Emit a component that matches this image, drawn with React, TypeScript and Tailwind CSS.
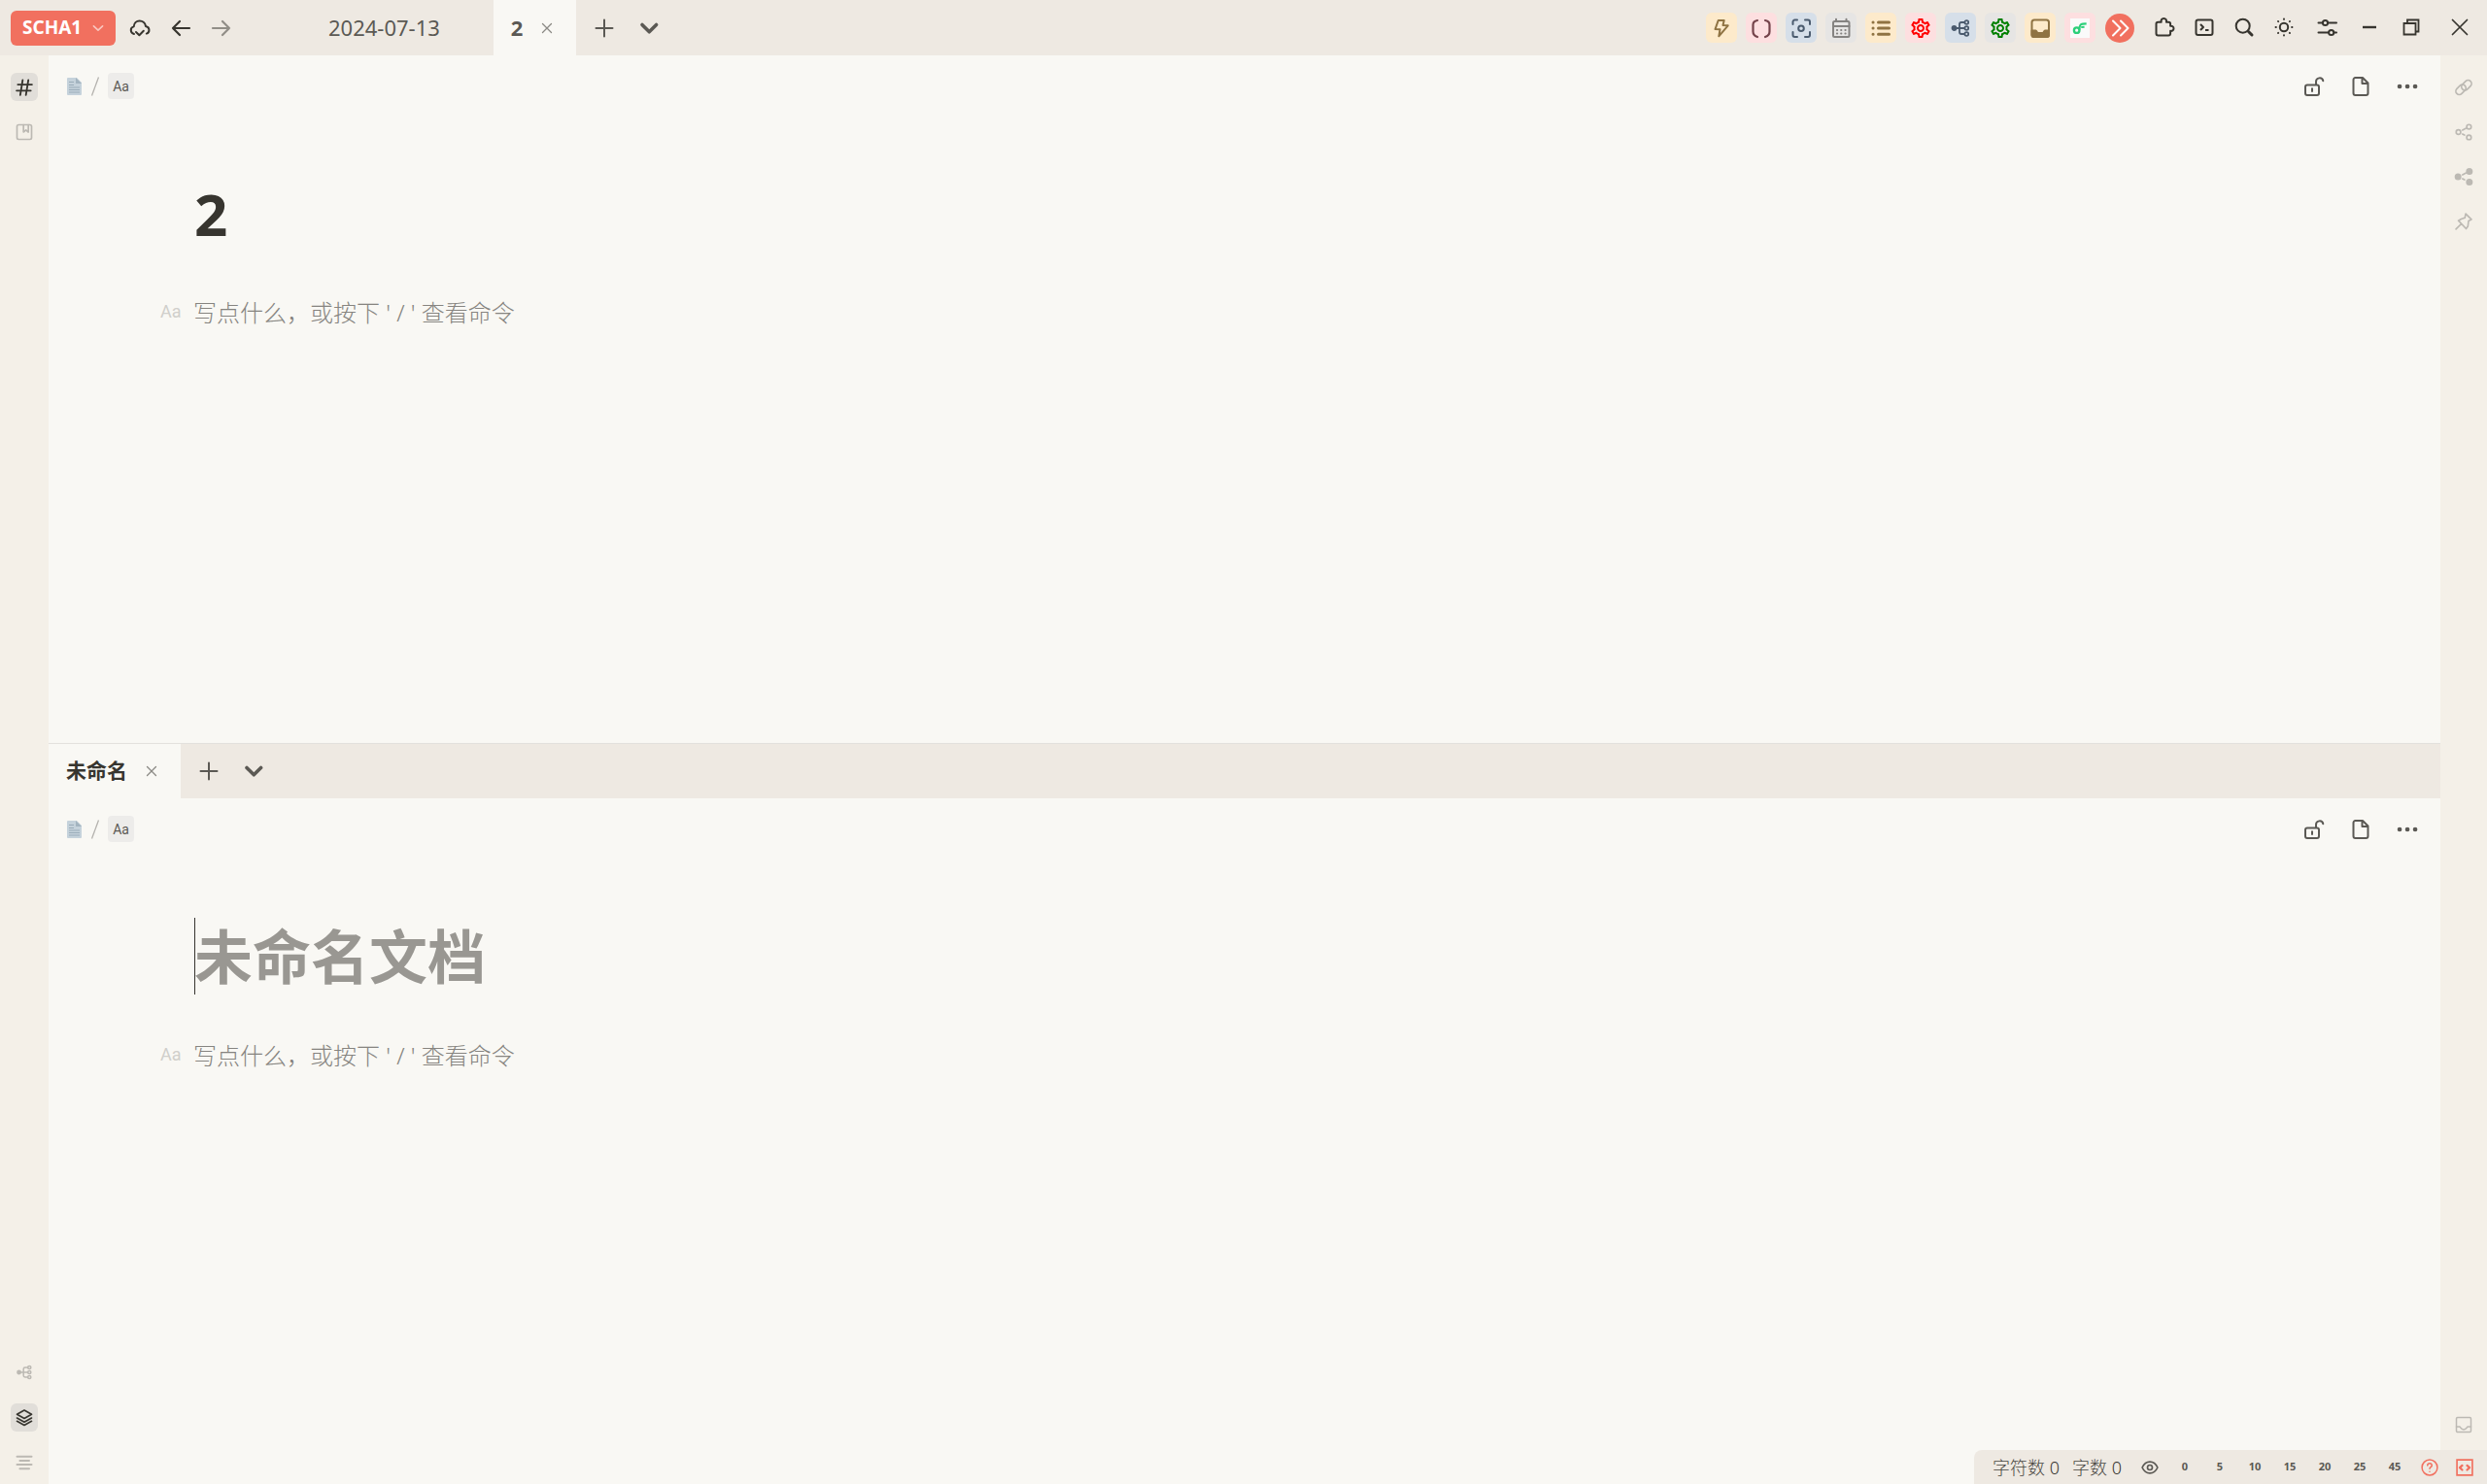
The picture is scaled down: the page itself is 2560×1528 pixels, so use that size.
import type { ReactNode } from "react";
import { MdOutlineSettings } from "react-icons/md";

function Icon({
  children,
  size = 24,
  stroke = 2,
  fill = "none",
}: {
  children: ReactNode;
  size?: number;
  stroke?: number;
  fill?: string;
}) {
  return (
    <svg
      width={size}
      height={size}
      viewBox="0 0 24 24"
      fill={fill}
      stroke="currentColor"
      strokeWidth={stroke}
      strokeLinecap="round"
      strokeLinejoin="round"
      aria-hidden="true"
      className="shrink-0"
    >
      {children}
    </svg>
  );
}

function IconButton({
  label,
  className = "",
  children,
}: {
  label: string;
  className?: string;
  children: ReactNode;
}) {
  return (
    <button
      type="button"
      aria-label={label}
      className={`flex shrink-0 items-center justify-center ${className}`}
    >
      {children}
    </button>
  );
}

function TreeIcon({ size = 24 }: { size?: number }) {
  return (
    <Icon size={size} stroke={1.8}>
      <circle cx="5.5" cy="12" r="2" fill="currentColor" />
      <path d="M7 12h9M16 6h-3a2 2 0 0 0-2 2v8a2 2 0 0 0 2 2h3" />
      <circle cx="18.3" cy="6" r="1.9" />
      <circle cx="18.3" cy="12" r="1.9" />
      <circle cx="18.3" cy="18" r="1.9" />
    </Icon>
  );
}

const plugins = [
  {
    label: "Flash",
    style: "bg-[#fdeacb] text-[#8f7343]",
    icon: (
      <Icon>
        <path d="M8.7 4h6l-1.2 5 5.2.3L9.3 20.3l1.2-7-5-.2z" />
      </Icon>
    ),
  },
  {
    label: "Brackets",
    style: "bg-[#fddfe0] text-[#74434a]",
    icon: (
      <Icon stroke={2.2}>
        <path d="M8 4C5 4.5 3.5 5.5 3.5 8.5v7c0 3 1.5 4.500 4.500 5.500M16 4c3 .5 4.500 1.500 4.500 4.500v7c0 3-1.500 4.500-4.500 5.500" />
      </Icon>
    ),
  },
  {
    label: "Focus",
    style: "bg-[#d6dfe9] text-[#4b5b6e]",
    icon: (
      <Icon>
        <path d="M3.500 8V5.500a2 2 0 0 1 2-2H8M16 3.500h3a2 2 0 0 1 2 2V8M21 16v3a2 2 0 0 1-2 2h-3M8 21H5.500a2 2 0 0 1-2-2v-3" />
        <circle cx="12" cy="12.3" r="2.8" />
      </Icon>
    ),
  },
  {
    label: "Calendar",
    style: "bg-[#e6e5e4] text-[#858381]",
    icon: (
      <Icon>
        <rect x="4" y="5" width="16.500" height="16" rx="1.500" />
        <path d="M4 10h16.500M7 2.800V5M17.500 2.800V5" />
        <path
          d="M8 14h.1M12.200 14h.1M16.500 14h.1M8 17.500h.1M12.200 17.500h.1M16.500 17.500h.1"
          strokeWidth="2.2"
        />
      </Icon>
    ),
  },
  {
    label: "List",
    style: "bg-[#fdeacb] text-[#8f7343]",
    icon: (
      <Icon stroke={3}>
        <path d="M4 6h.1M4 12h.1M4 18.300h.1M9.500 6h11M9.500 12h11M9.500 18.300h11" />
      </Icon>
    ),
  },
  {
    label: "Settings",
    style: "bg-[#fddfe0] text-[#ff0000]",
    icon: <MdOutlineSettings size={24} />,
  },
  {
    label: "Mind map",
    style: "bg-[#d6dfe9] text-[#4b5b6e]",
    icon: <TreeIcon />,
  },
  {
    label: "Tools",
    style: "bg-[#e6e5e4] text-[#008000]",
    icon: <MdOutlineSettings size={24} />,
  },
  {
    label: "Inbox",
    style: "bg-[#fdeacb] text-[#8f7343]",
    icon: (
      <Icon>
        <rect x="3.500" y="3.500" width="17.500" height="17.500" rx="2.500" />
        <path
          d="M3.500 14.500h4c1 0 1 2.500 2.500 2.500h4.500c1.500 0 1.500-2.500 2.500-2.500h4V19a2 2 0 0 1-2 2H5.500a2 2 0 0 1-2-2z"
          fill="currentColor"
        />
      </Icon>
    ),
  },
  {
    label: "Flow",
    style: "bg-[#fddfe0] text-[#2bcf79]",
    icon: (
      <span className="flex size-5 items-center justify-center bg-[#fafafa]">
        <Icon size={20}>
          <circle cx="8" cy="14.600" r="3.300" strokeWidth="2.800" />
          <path
            d="M11.300 14c0-5 .7-7 4.200-7.300l4.500-.2M13.500 10.800l4-.3"
            strokeWidth="2.600"
            strokeLinecap="butt"
          />
        </Icon>
      </span>
    ),
  },
];

const tools = [
  {
    label: "Plugins",
    icon: (
      <Icon>
        <path d="M5.500 20.500c-1.300 0-2-.7-2-2V8.500c0-1.200.7-1.800 2-1.800h3.200c-.7-2 .6-3.700 2.600-3.700s3.300 1.700 2.600 3.700h2.300c1.200 0 1.900.6 1.900 1.800v2.300c1.800-.5 3.400.7 3.400 2.500s-1.600 3-3.400 2.500v2.700c0 1.300-.7 2-2 2z" />
      </Icon>
    ),
  },
  {
    label: "Terminal",
    icon: (
      <Icon>
        <rect x="3.500" y="4.500" width="17" height="15.500" rx="2" />
        <path d="m8 9 3 3-3 3M13 15h3.500" strokeLinecap="butt" />
      </Icon>
    ),
  },
  {
    label: "Search",
    icon: (
      <Icon>
        <circle cx="10.700" cy="10.700" r="7" />
        <path d="m16.500 16.500 3.500 3.500" strokeWidth="3" />
      </Icon>
    ),
  },
  {
    label: "Theme",
    icon: (
      <Icon>
        <circle cx="12" cy="12" r="4.200" />
        <path
          d="M12 3.500v.4M12 20.100v.4M3.500 12h.4M20.100 12h.4M6 6l.2.2M17.800 17.800l.2.2M6 18l.2-.2M17.800 6.200l.2-.2"
          strokeWidth="1.900"
        />
      </Icon>
    ),
  },
];

function CloseIcon() {
  return (
    <Icon stroke={1.3}>
      <path d="m7.500 7.500 9 9M16.500 7.500l-9 9" />
    </Icon>
  );
}

function Tab({ title, active = false }: { title: string; active?: boolean }) {
  return (
    <div
      className={`flex items-center gap-[13px] self-stretch px-[18px] ${active ? "bg-[#f9f8f4] font-bold" : ""}`}
    >
      <span>{title}</span>
      <IconButton
        label="Close tab"
        className={active ? "size-6 text-[#8b8984]" : "invisible size-6"}
      >
        <CloseIcon />
      </IconButton>
    </div>
  );
}

function TabActions() {
  return (
    <div className="flex items-center gap-[22px] pl-[17px] text-[#5b5954]">
      <IconButton label="New tab" className="size-6">
        <Icon>
          <path d="M12 3.500v17M3.500 12h17" />
        </Icon>
      </IconButton>
      <IconButton label="Tab list" className="size-6">
        <Icon stroke={3.6}>
          <path d="m5 8.500 7.300 7.300 7.300-7.300" />
        </Icon>
      </IconButton>
    </div>
  );
}

function TitleBar() {
  return (
    <header className="flex h-[57px] shrink-0 items-center bg-[#eee9e2] pl-[11px] pr-3 text-[#37352f]">
      <button
        type="button"
        className="flex h-9 w-[108px] items-center justify-between rounded-md bg-[#f1705f] pl-3 pr-2 text-[19px] font-bold text-white"
      >
        SCHA1
        <Icon size={20} stroke={2}>
          <path d="m6.500 9.500 5.500 5 5.500-5" className="opacity-60" />
        </Icon>
      </button>

      <div className="flex gap-[18px] pl-[13px] pr-20">
        <IconButton label="Sync" className="size-6">
          <Icon>
            <path d="M6 18c-4-1-4.500-6.500-.3-7.600C6.200 2.600 16.800 2.600 18 10c4.500 1 4.500 6.500.8 7.600" />
            <path d="m8 16 3.400 3.200 4.400-4.400" />
          </Icon>
        </IconButton>
        <IconButton label="Back" className="size-6">
          <Icon stroke={2.2}>
            <path d="M21 12H4M11 5l-7 7 7 7" />
          </Icon>
        </IconButton>
        <IconButton label="Forward" className="size-6 opacity-50">
          <Icon stroke={2.2}>
            <path d="M3 12h17M13 5l7 7-7 7" />
          </Icon>
        </IconButton>
      </div>

      <nav className="flex items-center self-stretch text-[22px] text-[#5b5954]">
        <Tab title="2024-07-13" />
        <Tab title="2" active />
        <TabActions />
      </nav>

      <div className="ml-auto flex items-center">
        <div className="flex gap-[9px]">
          {plugins.map((plugin) => (
            <IconButton
              key={plugin.label}
              label={plugin.label}
              className={`h-[31px] w-8 rounded-md ${plugin.style}`}
            >
              {plugin.icon}
            </IconButton>
          ))}
        </div>
        <IconButton
          label="More plugins"
          className="ml-2.5 size-[30px] rounded-full bg-[#f1705f] text-white"
        >
          <Icon stroke={2}>
            <path d="m5 4.500 7.500 7.500L5 19.500M13 4.500l7.500 7.500-7.500 7.500" />
          </Icon>
        </IconButton>
        <div className="ml-[15px] flex gap-[9px] pb-0.5">
          {tools.map((tool) => (
            <IconButton key={tool.label} label={tool.label} className="size-8">
              {tool.icon}
            </IconButton>
          ))}
        </div>
        <div className="ml-[13px] flex gap-[11px] pb-0.5">
          <IconButton label="Preferences" className="size-8">
            <Icon>
              <path d="M2.500 7.500H7M12.500 7.500H21M2.500 17.500H13M18.500 17.500H21" />
              <circle cx="9.500" cy="7.500" r="2.600" />
              <circle cx="15.700" cy="17.500" r="2.600" />
            </Icon>
          </IconButton>
          <IconButton label="Minimize" className="size-8">
            <Icon>
              <path d="M5 12h14" strokeLinecap="butt" strokeWidth="2.400" />
            </Icon>
          </IconButton>
          <IconButton label="Restore" className="size-8">
            <Icon stroke={1.8}>
              <path d="M4.500 8h12v11.500h-12zM8 8V4.500h11.500v12h-3" strokeLinejoin="miter" />
            </Icon>
          </IconButton>
          <IconButton label="Close" className="ml-[7px] size-8">
            <Icon stroke={1.7}>
              <path d="m4.500 4.500 15 15M19.500 4.500l-15 15" />
            </Icon>
          </IconButton>
        </div>
      </div>
    </header>
  );
}

function LeftDock() {
  return (
    <aside className="flex w-[50px] shrink-0 flex-col items-center justify-between bg-[#f4f0e8] pb-2 pt-[18px] text-[#bcb9b3]">
      <div className="flex flex-col gap-[18px]">
        <IconButton label="Tags" className="h-[29px] w-7 rounded-md bg-[#e1ded9] text-[#37352f]">
          <Icon size={20} stroke={2.2}>
            <path d="M4 8.500h17.500M2.500 16h17.500M10 3 7 21.500M17 3l-3 18.500" />
          </Icon>
        </IconButton>
        <IconButton label="Bookmarks" className="size-7">
          <Icon size={20} stroke={2}>
            <rect x="3" y="3" width="18" height="18" rx="2" />
            <path d="M11 3v9l3-2.500 3 2.500V3" />
          </Icon>
        </IconButton>
      </div>
      <div className="flex flex-col gap-[18px]">
        <IconButton label="Graph" className="size-7">
          <TreeIcon size={20} />
        </IconButton>
        <IconButton label="Layers" className="h-[29px] w-7 rounded-md bg-[#e1ded9] text-[#37352f]">
          <Icon size={20} stroke={2}>
            <path d="m12 2.500 9 5-9 5-9-5zM3 12l9 5 9-5M3 16l9 5 9-5" />
          </Icon>
        </IconButton>
        <IconButton label="Outline" className="size-7">
          <Icon size={20} stroke={2.400}>
            <path d="M3 4.500h18M6.500 9.500h11.500M3 14.500h18M6.500 19.500h11.500" />
          </Icon>
        </IconButton>
      </div>
    </aside>
  );
}

function RightDock() {
  return (
    <aside className="flex w-12 shrink-0 flex-col items-center justify-between bg-[#f4f0e8] pb-[47px] pt-[18px] text-[#bcb9b3]">
      <div className="flex flex-col gap-[18px]">
        <IconButton label="Backlinks" className="h-[29px] w-7">
          <Icon size={20}>
            <rect x="8.500" y="5" width="14" height="8.500" rx="4.250" transform="rotate(-45 15.500 9.250)" />
            <rect x="1.500" y="10.500" width="14" height="8.500" rx="4.250" transform="rotate(-45 8.500 14.750)" />
          </Icon>
        </IconButton>
        <IconButton label="Relation graph" className="size-7">
          <Icon size={20}>
            <circle cx="5.500" cy="12" r="2.800" />
            <circle cx="18.500" cy="5.500" r="2.800" />
            <circle cx="18.500" cy="18.500" r="2.800" />
            <path d="m10.500 9.500 4.500-2.200M10.500 14.500l2.500 1.200" />
          </Icon>
        </IconButton>
        <IconButton label="Global graph" className="size-7">
          <Icon size={20} fill="currentColor">
            <circle cx="5" cy="12" r="3.200" />
            <circle cx="19" cy="5.500" r="3.200" />
            <circle cx="19" cy="18.500" r="3.200" />
            <path d="m10.500 9.500 4.500-2.200M10.500 14.500l2.500 1.200" />
          </Icon>
        </IconButton>
        <IconButton label="Pin" className="size-7">
          <Icon size={20}>
            <path d="m14.500 2.500 7 7-3.500 2-.8 6.500-2.200 3-9.500-10L9 9l4.500-1.500zM9 15l-6.500 6.500" />
          </Icon>
        </IconButton>
      </div>
      <IconButton label="Inbox" className="size-7">
        <Icon size={20} stroke={1.8}>
          <rect x="3" y="3" width="18" height="18" rx="1.500" />
          <path d="M3 14.500h4c1 0 1.500 3.500 5 3.500s4-3.500 5-3.500h4" />
        </Icon>
      </IconButton>
    </aside>
  );
}

function Pane({ id, title, focused = false }: { id: string; title: string; focused?: boolean }) {
  return (
    <section className="flex min-h-0 flex-1 flex-col pt-[18px]">
      {/* Breadcrumb */}
      <div className="flex h-[27px] shrink-0 items-center pl-[19px] pr-[22px]">
        <svg width="15" height="18" viewBox="0 0 15 18" aria-hidden="true">
          <path d="M1 0h9l5 5v12a1 1 0 0 1-1 1H1a1 1 0 0 1-1-1V1a1 1 0 0 1 1-1z" fill="#c5d2db" />
          <path d="M9 0v6h6z" fill="#a3b4c0" />
          <path d="M2 4.500h5M2 7.500h5M2 10h11M2 12.500h11M2 15h11" stroke="#9aacb9" />
        </svg>
        <svg width="27" height="20" viewBox="0 0 27 20" stroke="#b5b3af" aria-hidden="true">
          <path d="M10.500 19.500 17.500.5" strokeWidth="1.300" />
        </svg>
        <button
          type="button"
          className="h-[27px] w-[27px] rounded-sm bg-[#edecea] font-[Roboto,sans-serif] text-sm text-[#5b5954]"
        >
          Aa
        </button>
        <div className="ml-auto flex gap-6 text-[#5b5954]">
          <IconButton label="Unlock" className="size-6">
            <Icon>
              <rect x="3" y="10.500" width="14" height="10.500" rx="2" />
              <path d="M14 10V7a3.700 3.700 0 0 1 7.300-.8M10 14.300v2.700" />
            </Icon>
          </IconButton>
          <IconButton label="Document" className="size-6">
            <Icon>
              <path d="M14 3H6.500a2 2 0 0 0-2 2v14a2 2 0 0 0 2 2h11a2 2 0 0 0 2-2V8.500zM13.500 3.500V9h5.500" />
            </Icon>
          </IconButton>
          <IconButton label="More" className="size-6">
            <Icon>
              <path d="M4 12h.1M12 12h.1M20 12h.1" strokeWidth="4.600" />
            </Icon>
          </IconButton>
        </div>
      </div>

      {/* Title */}
      <div className="mt-[78px] flex h-[79px] shrink-0 items-center pl-[150px] pr-[150px]">
        {focused && <span className="-mr-px h-[79px] w-px bg-[#37352f]" />}
        <input
          id={`${id}-title`}
          aria-label="Title"
          placeholder="未命名文档"
          defaultValue={title}
          className="h-[79px] min-w-0 flex-1 bg-transparent text-[60px] font-bold text-[#37352f] outline-none placeholder:text-[#999792]"
        />
      </div>

      {/* First block */}
      <div className="mt-[43px] flex h-[38px] shrink-0 items-center pl-[115px] pr-[150px]">
        <label
          htmlFor={`${id}-block`}
          className="w-[34px] shrink-0 font-[Roboto,sans-serif] text-lg text-[#d0cfcb]"
        >
          Aa
        </label>
        <input
          id={`${id}-block`}
          placeholder="写点什么，或按下 ' / ' 查看命令"
          className="h-[38px] min-w-0 flex-1 bg-transparent text-2xl font-light outline-none placeholder:text-[#868480]"
        />
      </div>
    </section>
  );
}

function StatusBar() {
  return (
    <footer className="absolute bottom-0 right-0 flex h-[35px] items-center rounded-tl-lg bg-[#eee9e2] pl-[19px] pr-[5px] text-[#5b5954]">
      <span className="mr-[13px] text-lg font-light text-[#4a4843]">
        字符数 <span className="text-[#37352f]">0</span>
      </span>
      <span className="mr-[11px] text-lg font-light text-[#4a4843]">
        字数 <span className="text-[#37352f]">0</span>
      </span>
      <IconButton label="Preview" className="w-9">
        <Icon size={20}>
          <path d="M2.500 12C7 2.500 17 2.500 21.500 12 17 21.500 7 21.500 2.500 12z" />
          <circle cx="12" cy="12" r="3" />
        </Icon>
      </IconButton>
      {[0, 5, 10, 15, 20, 25, 45].map((value) => (
        <button key={value} type="button" className="w-9 text-[11px] font-bold">
          {value}
        </button>
      ))}
      <IconButton label="Help" className="w-9 text-[#f1705f]">
        <Icon size={20} stroke={1.8}>
          <circle cx="12" cy="12" r="9.500" />
          <path d="M9.300 9.500c.2-3.500 5.600-3.200 5.400 0-.1 2-2.700 2-2.700 4M12 17v.1" />
        </Icon>
      </IconButton>
      <IconButton label="Source" className="w-9 text-[#f1705f]">
        <Icon size={20} stroke={2}>
          <path d="M2.500 2.500h19v19h-19z" strokeLinejoin="miter" />
          <path d="m9 9.500-3 2.700L9 15M15 9.500l3 2.700-3 2.800" strokeWidth="2.600" />
        </Icon>
      </IconButton>
    </footer>
  );
}

export default function App() {
  return (
    <div className="relative flex h-screen flex-col overflow-hidden bg-[#f9f8f4] font-['Noto_Sans','Noto_Sans_CJK_SC',sans-serif]">
      <TitleBar />
      <div className="flex min-h-0 flex-1">
        <LeftDock />
        <main className="flex min-w-0 flex-1 flex-col">
          <Pane id="first" title="2" />
          <nav className="mt-0.5 flex h-[57px] shrink-0 border-t border-[#e3e1dd] bg-[#eee9e2] text-[21px] text-[#37352f]">
            <Tab title="未命名" active />
            <TabActions />
          </nav>
          <Pane id="second" title="" focused />
        </main>
        <RightDock />
      </div>
      <StatusBar />
    </div>
  );
}
